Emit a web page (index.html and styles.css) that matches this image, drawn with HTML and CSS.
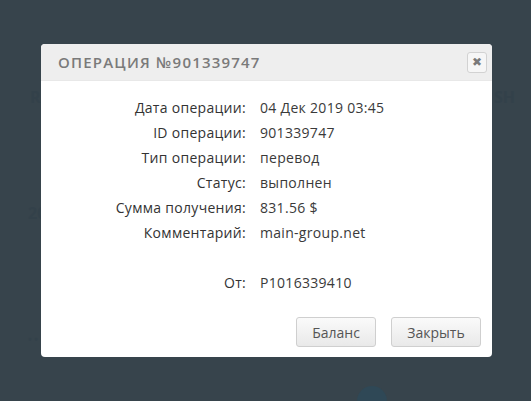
FILE: index.html
```html
<!DOCTYPE html>
<html lang="ru">
<head>
  <meta charset="UTF-8">
  <title>Операция №901339747</title>
  <link rel="stylesheet" href="styles.css">
</head>
<body>
  <div class="backdrop">
    <span class="ghost g1">R</span>
    <span class="ghost g2">SH</span>
    <span class="ghost g3">20</span>
    <span class="ghost g4">• •</span>
    <span class="dot"></span>
  </div>

  <div class="modal">
    <div class="modal-head">
      <h2>Операция №901339747</h2>
      <button class="close" title="Закрыть">&#10006;</button>
    </div>
    <div class="modal-body">
      <div class="info">
        <span class="lbl">Дата операции:</span><span class="val">04 Дек 2019 03:45</span>
        <span class="lbl">ID операции:</span><span class="val">901339747</span>
        <span class="lbl">Тип операции:</span><span class="val">перевод</span>
        <span class="lbl">Статус:</span><span class="val">выполнен</span>
        <span class="lbl">Сумма получения:</span><span class="val">831.56 $</span>
        <span class="lbl">Комментарий:</span><span class="val">main-group.net</span>
        <span class="lbl"></span><span class="val"></span>
        <span class="lbl">От:</span><span class="val">P1016339410</span>
      </div>
    </div>
    <div class="modal-foot">
      <button class="btn">Баланс</button>
      <button class="btn">Закрыть</button>
    </div>
  </div>
</body>
</html>
```

FILE: styles.css
```css
html, body { margin: 0; height: 100%; overflow: hidden; }
body { background-color: #37444c; font-family: "Open Sans", Arial, sans-serif; color: #333; padding: 44px 0 0 41px; box-sizing: border-box; }

.backdrop span { position: absolute; }
.ghost { color: #33414a; font-size: 16px; font-weight: bold; }
.g1 { left: 30px; top: 86px; }
.g2 { left: 494px; top: 86px; }
.g3 { left: 28px; top: 202px; }
.g4 { left: 28px; top: 332px; font-size: 10px; }
.dot { left: 357px; top: 386px; width: 30px; height: 30px; border-radius: 50%; background: #2f4856; }

.modal { position: relative; width: 451px; height: 313px; background: #fff; border-radius: 4px; display: flex; flex-direction: column; overflow: hidden; }
.modal-head { height: 37px; background: #eeeeee; border-bottom: 1px solid #e8e8e8; display: flex; align-items: center; justify-content: space-between; padding: 0 5px 0 17px; box-sizing: border-box; }
.modal-head h2 { margin: 0; font-size: 15px; font-weight: 600; text-transform: uppercase; letter-spacing: 1.2px; color: #7a7a7a; }
.close { width: 20px; height: 21px; padding: 0; border: 1px solid #d2d2d2; border-radius: 3px; background: #f6f6f6; color: #7a7a7a; font-size: 12px; line-height: 19px; cursor: pointer; }

.modal-body { flex: 1; padding-top: 14px; }
.info { display: grid; grid-template-columns: 205px 1fr; column-gap: 14px; font-size: 14px; line-height: 25px; letter-spacing: 0.3px; }
.lbl { text-align: right; color: #333; height: 25px; }
.val { color: #3a3a3a; }

.modal-foot { display: flex; justify-content: flex-end; gap: 15px; padding: 0 11px 10px 0; }
.btn { width: 80px; height: 30px; border: 1px solid #cfcfcf; border-radius: 3px; background: linear-gradient(#fafafa, #e9e9e9); font-family: "Open Sans", Arial, sans-serif; font-size: 14px; color: #555; cursor: pointer; }
.btn + .btn { width: 90px; }
```
